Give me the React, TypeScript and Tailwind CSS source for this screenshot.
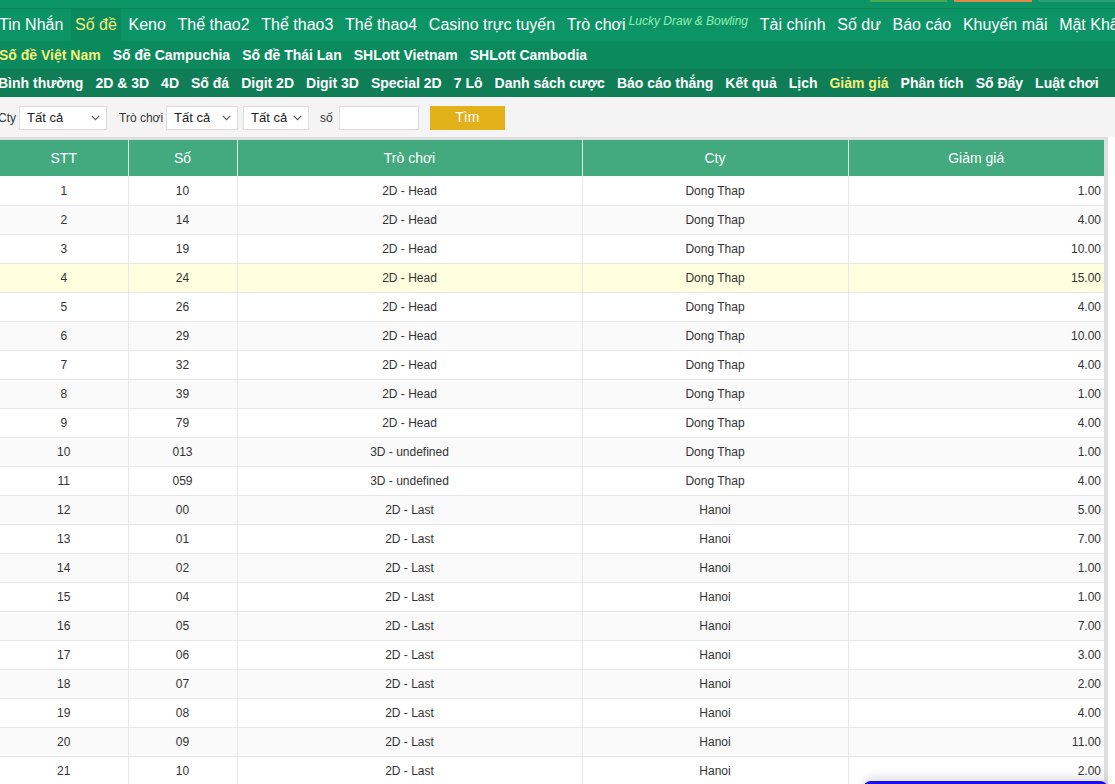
import React from "react";

const font = { fontFamily: '"Liberation Sans", Arial, sans-serif' };

const nav1 = [
  "Tin Nhắn",
  "Số đề",
  "Keno",
  "Thể thao2",
  "Thể thao3",
  "Thể thao4",
  "Casino trực tuyến",
];
const nav1b = ["Tài chính", "Số dư", "Báo cáo", "Khuyến mãi", "Mật Khẩu"];
const nav2 = ["Số đề Việt Nam", "Số đề Campuchia", "Số đề Thái Lan", "SHLott Vietnam", "SHLott Cambodia"];
const nav3 = [
  "Bình thường",
  "2D & 3D",
  "4D",
  "Số đá",
  "Digit 2D",
  "Digit 3D",
  "Special 2D",
  "7 Lô",
  "Danh sách cược",
  "Báo cáo thắng",
  "Kết quả",
  "Lịch",
  "Giảm giá",
  "Phân tích",
  "Số Đẩy",
  "Luật chơi",
];

type Row = [number, string, string, string, string];
const rows: Row[] = [
  [1, "10", "2D - Head", "Dong Thap", "1.00"],
  [2, "14", "2D - Head", "Dong Thap", "4.00"],
  [3, "19", "2D - Head", "Dong Thap", "10.00"],
  [4, "24", "2D - Head", "Dong Thap", "15.00"],
  [5, "26", "2D - Head", "Dong Thap", "4.00"],
  [6, "29", "2D - Head", "Dong Thap", "10.00"],
  [7, "32", "2D - Head", "Dong Thap", "4.00"],
  [8, "39", "2D - Head", "Dong Thap", "1.00"],
  [9, "79", "2D - Head", "Dong Thap", "4.00"],
  [10, "013", "3D - undefined", "Dong Thap", "1.00"],
  [11, "059", "3D - undefined", "Dong Thap", "4.00"],
  [12, "00", "2D - Last", "Hanoi", "5.00"],
  [13, "01", "2D - Last", "Hanoi", "7.00"],
  [14, "02", "2D - Last", "Hanoi", "1.00"],
  [15, "04", "2D - Last", "Hanoi", "1.00"],
  [16, "05", "2D - Last", "Hanoi", "7.00"],
  [17, "06", "2D - Last", "Hanoi", "3.00"],
  [18, "07", "2D - Last", "Hanoi", "2.00"],
  [19, "08", "2D - Last", "Hanoi", "4.00"],
  [20, "09", "2D - Last", "Hanoi", "11.00"],
  [21, "10", "2D - Last", "Hanoi", "2.00"],
];

function Chevron() {
  return (
    <svg width="9" height="6" viewBox="0 0 9 6" className="shrink-0">
      <path d="M0.8 0.8 L4.5 4.6 L8.2 0.8" fill="none" stroke="#555" strokeWidth="1.1" />
    </svg>
  );
}

function FakeSelect({ w }: { w: string }) {
  return (
    <div
      className={`${w} h-[24px] bg-white border border-[#dcdcdc] flex items-center justify-between pl-[7px] pr-[6px] text-[13px] text-[#222]`}
    >
      <span>Tất cả</span>
      <Chevron />
    </div>
  );
}

export default function App() {
  return (
    <div className="relative w-[1115px] h-[784px] overflow-hidden bg-white" style={font}>
      {/* top strip */}
      <div className="h-[8px] bg-[#0c9466] relative">
        <div className="absolute top-0 left-[870px] w-[77px] h-[2px] bg-[#4aa84e]" />
        <div className="absolute top-0 left-[954px] w-[78px] h-[2px] bg-[#e0874a]" />
        <div className="absolute top-0 left-[1038px] w-[77px] h-[2px] bg-[#2c9d78]" />
      </div>
      <div className="h-[1px] bg-[#0a8559]" />
      {/* nav row 1 */}
      <div className="h-[32px] bg-[#0c9466] flex items-stretch -ml-[5px] whitespace-nowrap text-[16px] text-white gap-[3.7px]">
        {nav1.map((n) => (
          <div
            key={n}
            className={`px-[4px] flex items-center ${n === "Số đề" ? "bg-[#0a8a5d] text-[#f5ee7a]" : ""}`}
          >
            {n}
          </div>
        ))}
        <div className="px-[4px] flex items-center">
          <span>Trò chơi</span>
          <span className="italic text-[12px] text-[#8ff0ae] self-start mt-[3px] ml-[3px]">
            Lucky Draw &amp; Bowling
          </span>
        </div>
        {nav1b.map((n) => (
          <div key={n} className="px-[4px] flex items-center">
            {n}
          </div>
        ))}
      </div>
      {/* nav row 2 */}
      <div className="h-[28px] bg-[#0a8a5d] flex items-center whitespace-nowrap text-[14px] font-bold text-white gap-[12px] -ml-[1px]">
        {nav2.map((n, i) => (
          <span key={n} className={i === 0 ? "text-[#f5ee7a]" : ""}>
            {n}
          </span>
        ))}
      </div>
      {/* nav row 3 */}
      <div className="h-[28px] bg-[#0f7e56] flex items-center whitespace-nowrap text-[14px] font-bold text-white gap-[12px] -ml-[2px]">
        {nav3.map((n) => (
          <span key={n} className={n === "Giảm giá" ? "text-[#f5ee7a]" : ""}>
            {n}
          </span>
        ))}
      </div>
      {/* filter row */}
      <div className="h-[40px] bg-[#f4f4f4] flex items-center text-[12px] text-[#333] -ml-[2px] pt-[1px]">
        <span className="mr-[3px]">Cty</span>
        <FakeSelect w="w-[88px]" />
        <span className="ml-[12px] mr-[3px]">Trò chơi</span>
        <FakeSelect w="w-[72px]" />
        <div className="ml-[5px]">
          <FakeSelect w="w-[66px]" />
        </div>
        <span className="ml-[11px] mr-[6px]">số</span>
        <div className="w-[80px] h-[24px] bg-white border border-[#dcdcdc]" />
        <div className="ml-[11px] w-[75px] h-[24px] bg-[#e2b018] text-white text-[14px] flex items-center justify-center">
          Tìm
        </div>
      </div>
      {/* table */}
      <div className="w-[1108px] border-t-[3px] border-r-[4px] border-[#dedede]">
        <table className="w-[1104px] table-fixed border-collapse text-[12px] text-[#333]">
          <colgroup>
            <col className="w-[128px]" />
            <col className="w-[109px]" />
            <col className="w-[345px]" />
            <col className="w-[266px]" />
            <col className="w-[256px]" />
          </colgroup>
          <thead>
            <tr className="h-[36px] bg-[#42aa7e] text-white text-[14px]">
              {["STT", "Số", "Trò chơi", "Cty", "Giảm giá"].map((h, i) => (
                <th
                  key={h}
                  className={`font-normal text-center ${i < 4 ? "border-r border-[#d8efe4]" : ""}`}
                >
                  {h}
                </th>
              ))}
            </tr>
          </thead>
          <tbody>
            {rows.map((r) => {
              const bg = r[0] === 4 ? "bg-[#ffffe0]" : r[0] % 2 === 0 ? "bg-[#fafafa]" : "bg-white";
              return (
                <tr key={r[0]} className={`h-[29px] ${bg} border-b border-[#e8e8e8]`}>
                  <td className="text-center border-r border-[#e8e8e8] pt-[1px]">{r[0]}</td>
                  <td className="text-center border-r border-[#e8e8e8] pt-[1px]">{r[1]}</td>
                  <td className="text-center border-r border-[#e8e8e8] pt-[1px]">{r[2]}</td>
                  <td className="text-center border-r border-[#e8e8e8] pt-[1px]">{r[3]}</td>
                  <td className="text-right pr-[3px] pt-[1px]">{r[4]}</td>
                </tr>
              );
            })}
          </tbody>
        </table>
      </div>
      {/* floating blue element at bottom right */}
      <div className="absolute left-[863px] top-[781px] w-[245px] h-[20px] rounded-t-[8px] bg-[#1a0af5] shadow-[0_-4px_8px_rgba(0,0,0,0.12)]" />
    </div>
  );
}
